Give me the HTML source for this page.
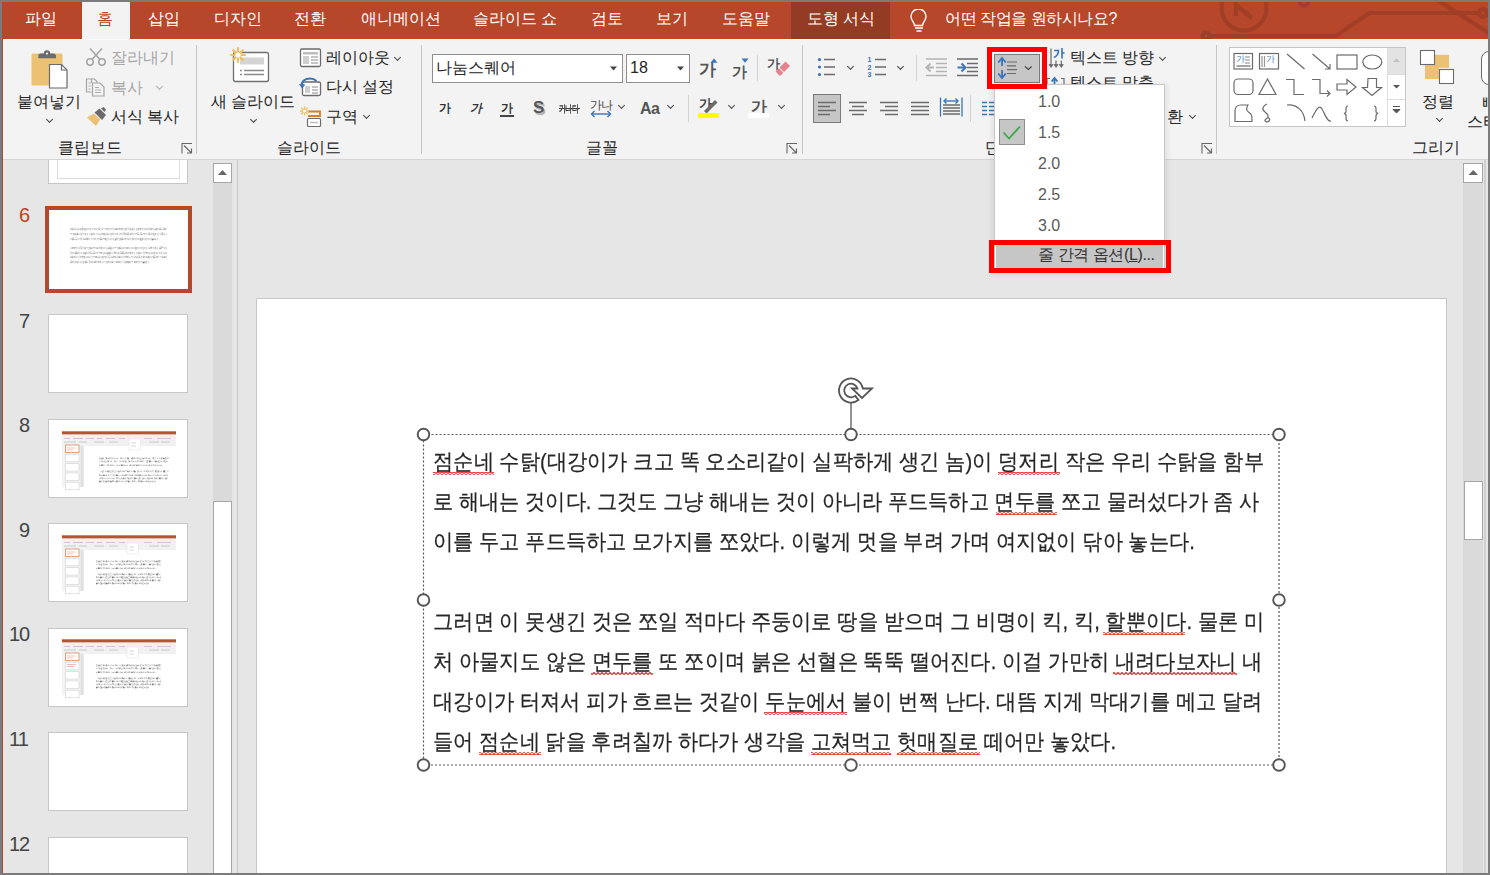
<!DOCTYPE html>
<html><head><meta charset="utf-8">
<style>
*{margin:0;padding:0;box-sizing:border-box}
html,body{width:1490px;height:875px;overflow:hidden;background:#e6e6e6;font-family:"Liberation Sans",sans-serif;color:#262626}
.a{position:absolute}
.t{position:absolute;white-space:nowrap;line-height:20px}
.tab{position:absolute;top:9px;font-size:16px;color:#fff;white-space:nowrap;line-height:20px}
.rb{position:absolute;font-size:16px;white-space:nowrap;line-height:20px;color:#262626}
.sep{position:absolute;width:1px;background:#c6c6c6}
.chev{position:absolute;width:6px;height:6px;border-right:1.3px solid #444;border-bottom:1.3px solid #444;transform:rotate(45deg)}
.num{position:absolute;font-size:20px;color:#444;line-height:20px;letter-spacing:-1px}
.th{position:absolute;left:48px;width:140px;height:79px;background:#fff;border:1px solid #c6c6c6}
.st{position:absolute;left:433px;font-size:22px;color:#262626;-webkit-text-stroke:0.25px #262626;white-space:nowrap;line-height:30px;transform-origin:0 0}
.h{position:absolute;width:13px;height:13px;border-radius:50%;border:1.6px solid #595959;background:#fff}
.mi{position:absolute;left:1038px;font-size:16px;color:#5a5a5a;line-height:20px}
</style></head><body>

<!-- tab bar -->
<div class="a" style="left:0;top:0;width:1490px;height:39px;background:#b7472a"></div>
<div class="a" style="left:82px;top:2px;width:48px;height:38px;background:#f3f3f3"></div>
<div class="a" style="left:791px;top:2px;width:99px;height:37px;background:#943b23"></div>

<svg class="a" style="left:0;top:0" width="1490" height="39" viewBox="0 0 1490 39">
 <g fill="none" stroke="#a03f26" stroke-width="4.2">
  <circle cx="1244" cy="8" r="22.5"/>
  <path d="M1236 0v16M1236 5l16 13"/>
  <path d="M1210 36h126l33-23h108"/>
  <circle cx="1206" cy="36" r="3.5"/>
  <circle cx="1483" cy="13" r="4"/>
  <circle cx="1304" cy="2" r="4"/>
  <path d="M1437 0l52 33"/>
 </g>
</svg>
<svg class="a" style="left:909px;top:9px" width="20" height="24" viewBox="909 9 20 24">
 <path d="M914.5 25.5c0-3-3.5-5-3.5-9a7.5 7.5 0 0 1 15 0c0 4-3.5 6-3.5 9z" fill="none" stroke="#fff" stroke-width="1.4"/>
 <path d="M915 28h8M916.5 31h5" stroke="#fff" stroke-width="1.4"/>
</svg>
<div id="tabs">
<div class="tab" style="left:25px">파일</div>
<div class="tab" style="left:97px;color:#b7472a">홈</div>
<div class="tab" style="left:148px">삽입</div>
<div class="tab" style="left:214px">디자인</div>
<div class="tab" style="left:294px">전환</div>
<div class="tab" style="left:361px">애니메이션</div>
<div class="tab" style="left:473px">슬라이드 쇼</div>
<div class="tab" style="left:591px">검토</div>
<div class="tab" style="left:656px">보기</div>
<div class="tab" style="left:722px">도움말</div>
<div class="tab" style="left:807px">도형 서식</div>
<div class="tab" style="left:945px;letter-spacing:-0.45px">어떤 작업을 원하시나요?</div>
</div>

<!-- ribbon -->
<div class="a" style="left:0;top:39px;width:1490px;height:121px;background:#f3f3f3;border-bottom:1px solid #d5d5d5"></div>


<!-- ===== clipboard group ===== -->
<svg class="a" style="left:28px;top:47px" width="44" height="44" viewBox="28 47 44 44">
 <rect x="31.5" y="53.5" width="31" height="32" rx="1.5" fill="#ecc173"/>
 <path d="M38.3 58.3v-2.3a2.5 2.5 0 0 1 2.5-2.5h3a3.2 3.2 0 0 1 6.4 0h3.3a2.5 2.5 0 0 1 2.5 2.5v2.3z" fill="#6b6b6b"/>
 <circle cx="47" cy="53.6" r="1.1" fill="#f3f3f3"/>
 <path d="M49.5 64.5h12l5.5 5.5v18h-17.5z" fill="#fff" stroke="#6b6b6b" stroke-width="1.2"/>
 <path d="M61.5 64.5v5.5h5.5" fill="none" stroke="#6b6b6b" stroke-width="1.2"/>
</svg>
<div class="rb" style="left:17px;top:92px">붙여넣기</div>
<div class="chev" style="left:47px;top:117px;width:5px;height:5px"></div>
<svg class="a" style="left:86px;top:47px" width="22" height="20" viewBox="86 47 22 20">
 <path d="M90 48.5l10 11M102 48.5l-10 11" stroke="#a6a6a6" stroke-width="1.6" fill="none"/>
 <circle cx="90" cy="62" r="3.2" fill="none" stroke="#a6a6a6" stroke-width="1.5"/>
 <circle cx="102" cy="62" r="3.2" fill="none" stroke="#a6a6a6" stroke-width="1.5"/>
</svg>
<div class="rb" style="left:111px;top:48px;color:#a6a6a6">잘라내기</div>
<svg class="a" style="left:85px;top:77px" width="22" height="21" viewBox="85 77 22 21">
 <path d="M91.5 83v-4h-5v13h5" fill="none" stroke="#a6a6a6" stroke-width="1.2"/>
 <path d="M91.5 79h3l2.5 2.5v1.5" fill="none" stroke="#a6a6a6" stroke-width="1.2"/>
 <path d="M92.5 83h7.5l4 4v9h-11.5z" fill="#f3f3f3" stroke="#a6a6a6" stroke-width="1.2"/>
 <path d="M88.5 83h2M88.5 86h2M88.5 89h2M95 87.5h4M95 90h6M95 92.5h6" stroke="#a6a6a6" stroke-width="0.9"/>
</svg>
<div class="rb" style="left:111px;top:78px;color:#a6a6a6">복사</div>
<div class="chev" style="left:157px;top:84px;width:5px;height:5px;border-color:#b0b0b0"></div>
<svg class="a" style="left:85px;top:106px" width="24" height="22" viewBox="85 106 24 22">
 <path d="M87 117.5l7-4 6 6-4 6.5z" fill="#ecc173"/>
 <path d="M94.5 112.5l5-4 6.5 6.5-4 5z" fill="#6b6b6b"/>
 <path d="M101 108.5l2.5-1.5 2.5 2.5-1.5 2.5z" fill="#6b6b6b"/>
</svg>
<div class="rb" style="left:111px;top:107px">서식 복사</div>
<div class="rb" style="left:58px;top:138px">클립보드</div>
<svg class="a" style="left:180px;top:142px" width="14" height="14" viewBox="180 142 14 14">
 <path d="M182 153.5v-10h10M184 145.5l7.5 7.5M191.5 148.5v4.5h-4.5" fill="none" stroke="#666" stroke-width="1.1"/>
</svg>
<div class="sep" style="left:196px;top:45px;height:109px"></div>

<!-- ===== slides group ===== -->
<svg class="a" style="left:228px;top:45px" width="44" height="40" viewBox="228 45 44 40">
 <rect x="233.5" y="52.5" width="35" height="29" rx="2" fill="#fff" stroke="#707070" stroke-width="1.3"/>
 <rect x="240" y="57.5" width="24" height="7" fill="#d4d4d4"/>
 <path d="M240 70.5h2M244 70.5h20M240 74.5h2M244 74.5h20" stroke="#8a8a8a" stroke-width="1.3"/>
 <g stroke="#f0c060" stroke-width="2.2"><path d="M238 47.3v15.4M230.3 55h15.4M232.6 49.6l10.8 10.8M243.4 49.6l-10.8 10.8"/></g>
 <circle cx="238" cy="55" r="2.6" fill="#fff"/>
</svg>
<div class="rb" style="left:211px;top:92px">새 슬라이드</div>
<div class="chev" style="left:251px;top:117px;width:5px;height:5px"></div>
<svg class="a" style="left:298px;top:46px" width="26" height="84" viewBox="298 46 26 84">
 <rect x="300.5" y="49" width="20" height="17.5" rx="1.5" fill="#fff" stroke="#6b6b6b" stroke-width="1.3"/>
 <rect x="303" y="52" width="15" height="2.5" fill="#bdbdbd"/>
 <rect x="303" y="56" width="6" height="8" fill="#cfcfcf"/>
 <path d="M311 57h7M311 60h7M311 63h7" stroke="#8a8a8a" stroke-width="1"/>
 <rect x="302.5" y="82" width="18" height="13.5" rx="1.5" fill="#fff" stroke="#6b6b6b" stroke-width="1.3"/>
 <rect x="305" y="86" width="5" height="7" fill="#cfcfcf"/>
 <path d="M312 87h6M312 90h6M312 93h6" stroke="#8a8a8a" stroke-width="1"/>
 <path d="M301.5 86c0-5 4-7.5 8.5-7.5 3 0 5 1 6.5 2.5" fill="none" stroke="#3b74b9" stroke-width="2"/>
 <path d="M299 84l3 4.5 3.5-4z" fill="#3b74b9"/>
 <path d="M308 111.5h12v4.5h-12" fill="none" stroke="#e07b22" stroke-width="1.8"/>
 <rect x="307.5" y="118.5" width="13" height="8" rx="1" fill="#fff" stroke="#6b6b6b" stroke-width="1.2"/>
 <path d="M310 122.5h8" stroke="#bdbdbd" stroke-width="1.5"/>
 <g stroke="#f0c060" stroke-width="1.3"><path d="M304.5 106.5v9M300 111h9M301.3 107.8l6.4 6.4M307.7 107.8l-6.4 6.4"/></g>
 <circle cx="304.5" cy="111" r="1.5" fill="#fff"/>
</svg>
<div class="rb" style="left:326px;top:48px">레이아웃</div>
<div class="chev" style="left:395px;top:55px;width:5px;height:5px"></div>
<div class="rb" style="left:326px;top:77px">다시 설정</div>
<div class="rb" style="left:326px;top:107px">구역</div>
<div class="chev" style="left:364px;top:113px;width:5px;height:5px"></div>
<div class="rb" style="left:277px;top:138px">슬라이드</div>
<div class="sep" style="left:421px;top:45px;height:109px"></div>

<!-- ===== font group ===== -->
<div class="a" style="left:432px;top:54px;width:191px;height:29px;background:#fff;border:1px solid #8f8f8f"></div>
<div class="rb" style="left:436px;top:58px">나눔스퀘어</div>
<svg class="a" style="left:608px;top:64px" width="12" height="8"><path d="M2 2.5h7l-3.5 4z" fill="#444"/></svg>
<div class="a" style="left:626px;top:54px;width:64px;height:29px;background:#fff;border:1px solid #8f8f8f"></div>
<div class="rb" style="left:630px;top:58px">18</div>
<svg class="a" style="left:675px;top:64px" width="12" height="8"><path d="M2 2.5h7l-3.5 4z" fill="#444"/></svg>
<div class="a" style="left:699px;top:60px;font-size:17px;line-height:20px;color:#555;font-weight:bold">가</div>
<svg class="a" style="left:709px;top:57px" width="10" height="7"><path d="M1.5 5.8h7l-3.5-4.3z" fill="#3b74b9"/></svg>
<div class="a" style="left:732px;top:63px;font-size:15px;line-height:18px;color:#555;font-weight:bold">가</div>
<svg class="a" style="left:740px;top:57px" width="10" height="7"><path d="M1.5 1.5h7l-3.5 4.3z" fill="#3b74b9"/></svg>
<div class="sep" style="left:757px;top:55px;height:26px;background:#d2d2d2"></div>
<div class="a" style="left:767px;top:56px;font-size:13px;line-height:15px;color:#555;font-weight:bold">가</div>
<svg class="a" style="left:768px;top:58px" width="24" height="22" viewBox="768 58 24 22"><path d="M779.5 67.5l6-6 4.5 4.5-6 6z" fill="#e5828e"/><path d="M776.5 70.5l2.3-2.3 4.5 4.5-2.3 2.3z" fill="#e5828e"/><path d="M775.5 71.5l1.5-1.5 4.5 4.5-1.5 1.5z" fill="#e5828e"/></svg>

<div class="a" style="left:439px;top:100px;font-size:12px;line-height:16px;color:#333;font-weight:bold">가</div>
<div class="a" style="left:470px;top:100px;font-size:12px;line-height:16px;color:#333;font-style:italic;font-weight:bold">가</div>
<div class="a" style="left:501px;top:100px;font-size:12px;line-height:16px;color:#333;font-weight:bold">가</div>
<div class="a" style="left:500px;top:115px;width:14px;height:1.5px;background:#444"></div>
<div class="a" style="left:533px;top:98px;font-size:17px;line-height:20px;color:#555;font-weight:bold;text-shadow:1.5px 1.5px 1px #aaa">S</div>
<div class="a" style="left:559px;top:103px;font-size:10px;line-height:12px;color:#333;letter-spacing:-1px;font-weight:bold;transform:scaleX(0.72);transform-origin:0 0">가나다</div>
<div class="a" style="left:559px;top:107.5px;width:21px;height:1.2px;background:#444"></div>
<div class="a" style="left:590px;top:98px;font-size:12px;line-height:14px;color:#444;letter-spacing:-1px">가나</div>
<svg class="a" style="left:589px;top:110px" width="24" height="8"><path d="M3 4h18" stroke="#3b74b9" stroke-width="1.4"/><path d="M5.5 1l-3 3 3 3M18.5 1l3 3-3 3" fill="none" stroke="#3b74b9" stroke-width="1.4"/></svg>
<div class="chev" style="left:619px;top:103px;width:5px;height:5px"></div>
<div class="a" style="left:640px;top:99px;font-size:16px;line-height:20px;color:#555;font-weight:bold;letter-spacing:-0.5px">Aa</div>
<div class="chev" style="left:668px;top:103px;width:5px;height:5px"></div>
<div class="sep" style="left:688px;top:95px;height:27px;background:#d2d2d2"></div>
<div class="a" style="left:699px;top:96px;font-size:13px;line-height:16px;color:#444;font-weight:bold">가</div>
<svg class="a" style="left:700px;top:97px" width="20" height="18"><path d="M4 14l11-11 2.5 2.5-11 11z" fill="#6b6b6b"/></svg>
<div class="a" style="left:698px;top:113px;width:21px;height:5px;background:#ffff00"></div>
<div class="chev" style="left:729px;top:103px;width:5px;height:5px"></div>
<div class="a" style="left:751px;top:97px;font-size:16px;line-height:20px;color:#555;font-weight:bold">가</div>
<div class="a" style="left:748px;top:113px;width:21px;height:5px;background:#fff"></div>
<div class="chev" style="left:779px;top:103px;width:5px;height:5px"></div>
<div class="rb" style="left:586px;top:138px">글꼴</div>
<svg class="a" style="left:785px;top:142px" width="14" height="14" viewBox="785 142 14 14">
 <path d="M787 153.5v-10h10M789 145.5l7.5 7.5M796.5 148.5v4.5h-4.5" fill="none" stroke="#666" stroke-width="1.1"/>
</svg>
<div class="sep" style="left:802px;top:45px;height:109px"></div>

<!-- ===== paragraph group ===== -->
<svg class="a" style="left:815px;top:55px" width="95" height="24" viewBox="815 55 95 24">
 <g fill="#3b74b9"><circle cx="819.5" cy="59.5" r="1.6"/><circle cx="819.5" cy="67" r="1.6"/><circle cx="819.5" cy="74.5" r="1.6"/></g>
 <path d="M824 59.5h11M824 67h11M824 74.5h11" stroke="#6b6b6b" stroke-width="1.3"/>
 <path d="M875 59.5h11M875 67h11M875 74.5h11" stroke="#6b6b6b" stroke-width="1.3"/>
 <g fill="#3b74b9" font-size="7" font-family="Liberation Sans" font-weight="bold"><text x="867.5" y="62">1</text><text x="867.5" y="69.5">2</text><text x="867.5" y="77">3</text></g>
</svg>
<div class="chev" style="left:848px;top:64px;width:5px;height:5px"></div>
<div class="chev" style="left:898px;top:64px;width:5px;height:5px"></div>
<div class="sep" style="left:916px;top:55px;height:26px;background:#d2d2d2"></div>
<svg class="a" style="left:924px;top:56px" width="58" height="22" viewBox="924 56 58 22">
 <path d="M926 59h21M936 63.5h11M936 67.5h11M936 71.5h11M926 75.5h21" stroke="#b4b4b4" stroke-width="1.4"/>
 <path d="M927 67.5h7" stroke="#b4b4b4" stroke-width="2"/><path d="M930.5 63.5l-4 4 4 4" fill="none" stroke="#b4b4b4" stroke-width="2"/>
 <path d="M957 59h21M967 63.5h11M967 67.5h11M967 71.5h11M957 75.5h21" stroke="#6b6b6b" stroke-width="1.4"/>
 <path d="M957.5 67.5h7" stroke="#3b74b9" stroke-width="2"/><path d="M961.5 63.5l4 4-4 4" fill="none" stroke="#3b74b9" stroke-width="2"/>
</svg>
<div class="a" style="left:813px;top:93.5px;width:28px;height:29.5px;background:#c6c6c6;border:1px solid #7a7a7a"></div>
<svg class="a" style="left:810px;top:95px" width="185" height="25" viewBox="810 95 185 25">
 <g stroke="#6b6b6b" stroke-width="1.3">
 <path d="M818 102.5h18M818 106.5h12M818 110.5h18M818 114.5h12"/>
 <path d="M849 102.5h18M852 106.5h12M849 110.5h18M852 114.5h12"/>
 <path d="M880 102.5h18M885 106.5h13M880 110.5h18M885 114.5h13"/>
 <path d="M911 102.5h18M911 106.5h18M911 110.5h18M911 114.5h18"/>
 <path d="M943 105h17M943 108h17M943 111h17M943 114h17"/>
 </g>
 <path d="M940.5 97.5v19M962 97.5v19" stroke="#3b74b9" stroke-width="1.3"/>
 <path d="M944 101h14" stroke="#3b74b9" stroke-width="1.4"/><path d="M946.5 98.5l-2.5 2.5 2.5 2.5M955.5 98.5l2.5 2.5-2.5 2.5" fill="none" stroke="#3b74b9" stroke-width="1.4"/>
 <path d="M982 102.5h5M982 106.5h5M982 110.5h5M982 114.5h5M989 102.5h6M989 106.5h6M989 110.5h6M989 114.5h6" stroke="#3b74b9" stroke-width="1.3"/>
</svg>
<div class="sep" style="left:970px;top:95px;height:27px;background:#d2d2d2"></div>
<div class="a" style="left:994px;top:54px;width:46px;height:29px;background:#c6c6c6;border:1px solid #7a7a7a"></div>
<svg class="a" style="left:994px;top:54px" width="46" height="29" viewBox="994 54 46 29">
 <path d="M1002 59v7M1002 70v7" stroke="#3b74b9" stroke-width="1.8"/>
 <path d="M998.3 62.5l3.7-4.5 3.7 4.5M998.3 73.5l3.7 4.5 3.7-4.5" fill="none" stroke="#3b74b9" stroke-width="1.9"/>
 <path d="M1007 62h10M1007 65.8h9M1007 69.6h10M1007 73.5h9" stroke="#6b6b6b" stroke-width="1.2"/>
 <path d="M1025 66.5l3.3 3 3.3-3" fill="none" stroke="#444" stroke-width="1.2"/>
</svg>
<svg class="a" style="left:1044px;top:46px" width="24" height="40" viewBox="1044 46 24 40">
 <path d="M1051 48.5v17M1056 60.5v5M1061.3 60.5v5" stroke="#6b6b6b" stroke-width="1.2"/>
 <path d="M1049 64.5l2 3 2-3zM1054 64.5l2 3 2-3zM1059.3 64.5l2 3 2-3z" fill="#6b6b6b" stroke="#6b6b6b" stroke-width="0.8"/>
 <path d="M1054 50.5h4.5c0 3-1.5 5.5-4.5 7M1062 48v10.5M1062 53h2.5" fill="none" stroke="#3b74b9" stroke-width="1.6"/>
 <path d="M1050 78.5h-3v7.5M1061 78.5h3v7.5" fill="none" stroke="#6b6b6b" stroke-width="1.2"/>
 <path d="M1054.5 86v-7.5M1051.5 81.5l3-3.5 3 3.5" fill="none" stroke="#3b74b9" stroke-width="1.8"/>
</svg>
<div class="rb" style="left:1070px;top:48px">텍스트 방향</div>
<div class="chev" style="left:1160px;top:55px;width:5px;height:5px"></div>
<div class="rb" style="left:1070px;top:73px">텍스트 맞춤</div>
<div class="rb" style="left:1167px;top:107px">환</div>
<div class="chev" style="left:1190px;top:113px;width:5px;height:5px"></div>
<div class="rb" style="left:985px;top:138px">단락</div>
<svg class="a" style="left:1200px;top:142px" width="14" height="14" viewBox="1200 142 14 14">
 <path d="M1202 153.5v-10h10M1204 145.5l7.5 7.5M1211.5 148.5v4.5h-4.5" fill="none" stroke="#666" stroke-width="1.1"/>
</svg>
<div class="sep" style="left:1216px;top:45px;height:109px"></div>

<!-- ===== drawing group ===== -->
<div class="a" style="left:1229px;top:47px;width:177px;height:80px;background:#fff;border:1px solid #c6c6c6"></div>
<div class="a" style="left:1387px;top:48px;width:18px;height:26px;background:#e3e3e3;border-left:1px solid #dcdcdc"></div>
<div class="a" style="left:1387px;top:74px;width:18px;height:52px;border-left:1px solid #dcdcdc;border-top:1px solid #dcdcdc"></div>
<div class="a" style="left:1387px;top:99px;width:18px;height:1px;background:#dcdcdc"></div>
<svg class="a" style="left:1229px;top:47px" width="177" height="80" viewBox="1229 47 177 80">
 <path d="M1393 62l3.5-3.5 3.5 3.5z" fill="#c2c2c2"/>
 <path d="M1393 85h7l-3.5 3.5z" fill="#555"/>
 <path d="M1393 106.5h7M1393 109.5h7l-3.5 3.5z" stroke="#555" stroke-width="1" fill="#555"/>
 <g fill="none" stroke="#6b6b6b" stroke-width="1.2">
  <rect x="1234" y="53.5" width="18.5" height="15.5"/>
  <path d="M1236.5 66h14"/>
  <rect x="1259.5" y="53.5" width="19" height="15.5"/>
  <path d="M1262 56v11M1264.5 56v11" stroke="#999"/>
  <path d="M1287 54l17.5 15"/>
  <path d="M1312.5 54l17.5 15M1330 64v5h-5"/>
  <rect x="1337" y="55" width="20" height="14"/>
  <ellipse cx="1372.3" cy="62" rx="9.5" ry="7"/>
  <rect x="1234" y="79" width="19" height="15.5" rx="4"/>
  <path d="M1267.5 79l-8.5 15.5h17z"/>
  <path d="M1286 79.5h8v15h10"/>
  <path d="M1312 79.5h8v14h10M1327 90.5l3 3-3 3"/>
  <path d="M1337 84h10v-4.5l9 7.5-9 7.5v-4.5h-10z"/>
  <path d="M1368 78.5h8.5v9h5l-9.5 8-9.5-8h5z"/>
  <path d="M1235 121.5V111c0-4 2-6 6-6h7c-2 3-2 6 1 7.5 3 1.5 3 4 3 9z"/>
  <path d="M1267 104c-4 2-6 5-2 8 4 3 4 5 1 7-3 2 1 4 3 2 2-2-1-4-2-3"/>
  <path d="M1287 105c10-1 17 6 18 16"/>
  <path d="M1312 118c4-8 7-14 10-9 3 5 5 13 9 12"/>
  <path d="M1348 106c-2 0-2 1-2 3v3l-1.5 1.5 1.5 1.5v3c0 2 0 3 2 3"/>
  <path d="M1374 106c2 0 2 1 2 3v3l1.5 1.5-1.5 1.5v3c0 2 0 3-2 3"/>
 </g>
 <text x="1236" y="62" font-size="9" fill="#3b74b9" font-family="Liberation Sans">가</text>
 <path d="M1245 57h5M1245 60h5M1245 63h5" stroke="#6b6b6b" stroke-width="0.8"/>
 <text x="1266" y="62" font-size="9" fill="#3b74b9" font-family="Liberation Sans">가</text>
</svg>
<svg class="a" style="left:1418px;top:48px" width="40" height="38" viewBox="1418 48 40 38">
 <rect x="1434" y="54.8" width="15" height="13" fill="#ecc173"/>
 <rect x="1425" y="64" width="14" height="15" fill="#ecc173"/>
 <rect x="1420.5" y="50.5" width="14" height="14" fill="#fff" stroke="#6b6b6b" stroke-width="1.1"/>
 <rect x="1439.5" y="69.5" width="14" height="14" fill="#fff" stroke="#6b6b6b" stroke-width="1.1"/>
</svg>
<div class="rb" style="left:1422px;top:92px">정렬</div>
<div class="chev" style="left:1437px;top:116px;width:5px;height:5px"></div>
<div class="a" style="left:1481px;top:51px;width:20px;height:34px;border:1.2px solid #6b6b6b;border-radius:8px;background:#fff"></div>
<div class="rb" style="left:1482px;top:93px">빠</div>
<div class="rb" style="left:1467px;top:112px">스타</div>
<div class="rb" style="left:1412px;top:138px">그리기</div>

<!-- workspace -->
<div class="a" style="left:0;top:160px;width:1490px;height:715px;background:#e6e6e6"></div>
<div class="a" style="left:2px;top:39px;width:1px;height:834px;background:#b7472a"></div>
<div class="a" style="left:3px;top:39px;width:1px;height:120px;background:#fff"></div>
<div class="a" style="left:3px;top:39px;width:1485px;height:1px;background:#fbfbfb"></div>
<!-- left scrollbar -->
<div class="a" style="left:213px;top:163px;width:19px;height:710px;background:#dadada"></div>
<div class="a" style="left:213px;top:163px;width:19px;height:20px;background:#fff;border:1px solid #a6a6a6"></div>
<svg class="a" style="left:213px;top:163px" width="19" height="20"><path d="M5 12h9l-4.5-5z" fill="#666"/></svg>
<div class="a" style="left:213px;top:501px;width:19px;height:380px;background:#fff;border:1px solid #a6a6a6"></div>
<div class="a" style="left:237px;top:160px;width:1px;height:713px;background:#c8c8c8"></div>
<!-- thumbnails -->
<div class="th" style="top:160px;height:24px;border-top:none"></div>
<div class="a" style="left:57px;top:160px;width:123px;height:19px;border:1px solid #dcdcdc;border-top:none"></div>
<div class="a" style="left:45px;top:206px;width:147px;height:87px;background:#fff;border:4px solid #b7472a"></div>
<div class="num" style="left:19px;top:205px;color:#c43e1c">6</div>
<div class="th" style="top:314px"></div>
<div class="num" style="left:19px;top:311px">7</div>
<div class="th" style="top:419px"></div>
<div class="num" style="left:19px;top:415px">8</div>
<div class="th" style="top:523px"></div>
<div class="num" style="left:19px;top:520px">9</div>
<div class="th" style="top:628px"></div>
<div class="num" style="left:9px;top:624px">10</div>
<div class="th" style="top:732px"></div>
<div class="num" style="left:9px;top:729px">11</div>
<div class="th" style="top:837px;height:60px"></div>
<div class="num" style="left:9px;top:834px">12</div>
<div class="a" style="left:49px;top:210px;width:139px;height:78px;overflow:hidden;opacity:0.6"><div class="a" style="left:-49px;top:-210px;width:1490px;height:875px"><div class="a" style="left:0;top:0;width:1490px;height:875px;transform-origin:0 0;transform:translate(18.94px,175.39px) scale(0.1168)"><div class="st" style="transform:scaleX(0.9211);top:447px">점순네 수탉(대강이가 크고 똑 오소리같이 실팍하게 생긴 놈)이 덩저리 작은 우리 수탉을 함부</div><div class="st" style="transform:scaleX(0.9188);top:487px">로 해내는 것이다. 그것도 그냥 해내는 것이 아니라 푸드득하고 면두를 쪼고 물러섰다가 좀 사</div><div class="st" style="transform:scaleX(0.9207);top:527px">이를 두고 푸드득하고 모가지를 쪼았다. 이렇게 멋을 부려 가며 여지없이 닦아 놓는다.</div><div class="st" style="transform:scaleX(0.9215);top:607px">그러면 이 못생긴 것은 쪼일 적마다 주둥이로 땅을 받으며 그 비명이 킥, 킥, 할뿐이다. 물론 미</div><div class="st" style="transform:scaleX(0.9219);top:647px">처 아물지도 않은 면두를 또 쪼이며 붉은 선혈은 뚝뚝 떨어진다. 이걸 가만히 내려다보자니 내</div><div class="st" style="transform:scaleX(0.9219);top:687px">대강이가 터져서 피가 흐르는 것같이 두눈에서 불이 번쩍 난다. 대뜸 지게 막대기를 메고 달려</div><div class="st" style="transform:scaleX(0.9194);top:727px">들어 점순네 닭을 후려칠까 하다가 생각을 고쳐먹고 헛매질로 떼어만 놓았다.</div></div></div></div><div class="a" style="left:49px;top:419.5px;width:139px;height:78px;overflow:hidden"><svg class="a" style="left:0;top:0" width="139" height="78" viewBox="0 0 139 78"><rect x="13" y="11.3" width="114" height="3.3" fill="#c24e2e"/><rect x="13" y="14.6" width="114" height="11.4" fill="#f1f1f1"/><path d="M15 18.5h6M24 18.5h10M37 18.5h8M48 18.5h5M57 18.5h9M70 18.5h6M95 18.5h8M108 18.5h14M15 22h12M30 22h8M45 22h10M60 22h9M100 22h10M112 22h9" stroke="#c9c9c9" stroke-width="1"/><rect x="13" y="26" width="22" height="41" fill="#f3f3f3"/><rect x="16.5" y="25.0" width="13.5" height="7.5" fill="#fff" stroke="#d9927a" stroke-width="0.9"/><rect x="16.5" y="34.3" width="13.5" height="7.5" fill="#fff" stroke="#dedede" stroke-width="0.9"/><rect x="16.5" y="43.6" width="13.5" height="7.5" fill="#fff" stroke="#dedede" stroke-width="0.9"/><rect x="16.5" y="52.9" width="13.5" height="7.5" fill="#fff" stroke="#dedede" stroke-width="0.9"/><rect x="16.5" y="62.2" width="13.5" height="7.5" fill="#fff" stroke="#dedede" stroke-width="0.9"/><rect x="31.5" y="26" width="3" height="41" fill="#e0e0e0"/><rect x="80" y="19" width="11.5" height="11" fill="#fff" stroke="#e4e4e4" stroke-width="0.6"/><path d="M82 23h5M82 26h5" stroke="#bbb" stroke-width="0.6"/><path d="M18 28h8M18 30h6" stroke="#d9a090" stroke-width="0.6"/></svg><div class="a" style="left:0;top:0;width:1490px;height:875px;opacity:0.8;transform-origin:0 0;transform:translate(13.93px,-0.15px) scale(0.0833)"><div class="st" style="transform:scaleX(0.9211);top:447px">점순네 수탉(대강이가 크고 똑 오소리같이 실팍하게 생긴 놈)이 덩저리 작은 우리 수탉을 함부</div><div class="st" style="transform:scaleX(0.9188);top:487px">로 해내는 것이다. 그것도 그냥 해내는 것이 아니라 푸드득하고 면두를 쪼고 물러섰다가 좀 사</div><div class="st" style="transform:scaleX(0.9207);top:527px">이를 두고 푸드득하고 모가지를 쪼았다. 이렇게 멋을 부려 가며 여지없이 닦아 놓는다.</div><div class="st" style="transform:scaleX(0.9215);top:607px">그러면 이 못생긴 것은 쪼일 적마다 주둥이로 땅을 받으며 그 비명이 킥, 킥, 할뿐이다. 물론 미</div><div class="st" style="transform:scaleX(0.9219);top:647px">처 아물지도 않은 면두를 또 쪼이며 붉은 선혈은 뚝뚝 떨어진다. 이걸 가만히 내려다보자니 내</div><div class="st" style="transform:scaleX(0.9219);top:687px">대강이가 터져서 피가 흐르는 것같이 두눈에서 불이 번쩍 난다. 대뜸 지게 막대기를 메고 달려</div><div class="st" style="transform:scaleX(0.9194);top:727px">들어 점순네 닭을 후려칠까 하다가 생각을 고쳐먹고 헛매질로 떼어만 놓았다.</div></div></div><div class="a" style="left:49px;top:524px;width:139px;height:78px;overflow:hidden"><svg class="a" style="left:0;top:0" width="139" height="78" viewBox="0 0 139 78"><rect x="13" y="11.3" width="114" height="3.3" fill="#c24e2e"/><rect x="13" y="14.6" width="114" height="11.4" fill="#f1f1f1"/><path d="M15 18.5h6M24 18.5h10M37 18.5h8M48 18.5h5M57 18.5h9M70 18.5h6M95 18.5h8M108 18.5h14M15 22h12M30 22h8M45 22h10M60 22h9M100 22h10M112 22h9" stroke="#c9c9c9" stroke-width="1"/><rect x="13" y="26" width="22" height="41" fill="#f3f3f3"/><rect x="16.5" y="25.0" width="13.5" height="7.5" fill="#fff" stroke="#d9927a" stroke-width="0.9"/><rect x="16.5" y="34.3" width="13.5" height="7.5" fill="#fff" stroke="#dedede" stroke-width="0.9"/><rect x="16.5" y="43.6" width="13.5" height="7.5" fill="#fff" stroke="#dedede" stroke-width="0.9"/><rect x="16.5" y="52.9" width="13.5" height="7.5" fill="#fff" stroke="#dedede" stroke-width="0.9"/><rect x="16.5" y="62.2" width="13.5" height="7.5" fill="#fff" stroke="#dedede" stroke-width="0.9"/><rect x="31.5" y="26" width="3" height="41" fill="#e0e0e0"/><rect x="78" y="19" width="11.5" height="11" fill="#fff" stroke="#e4e4e4" stroke-width="0.6"/><path d="M80 23h5M80 26h5" stroke="#bbb" stroke-width="0.6"/><path d="M18 28h8M18 30h6" stroke="#d9a090" stroke-width="0.6"/></svg><div class="a" style="left:0;top:0;width:1490px;height:875px;opacity:0.8;transform-origin:0 0;transform:translate(13.23px,1.74px) scale(0.078)"><div class="st" style="transform:scaleX(0.9211);top:447px">점순네 수탉(대강이가 크고 똑 오소리같이 실팍하게 생긴 놈)이 덩저리 작은 우리 수탉을 함부</div><div class="st" style="transform:scaleX(0.9188);top:487px">로 해내는 것이다. 그것도 그냥 해내는 것이 아니라 푸드득하고 면두를 쪼고 물러섰다가 좀 사</div><div class="st" style="transform:scaleX(0.9207);top:527px">이를 두고 푸드득하고 모가지를 쪼았다. 이렇게 멋을 부려 가며 여지없이 닦아 놓는다.</div><div class="st" style="transform:scaleX(0.9215);top:607px">그러면 이 못생긴 것은 쪼일 적마다 주둥이로 땅을 받으며 그 비명이 킥, 킥, 할뿐이다. 물론 미</div><div class="st" style="transform:scaleX(0.9219);top:647px">처 아물지도 않은 면두를 또 쪼이며 붉은 선혈은 뚝뚝 떨어진다. 이걸 가만히 내려다보자니 내</div><div class="st" style="transform:scaleX(0.9219);top:687px">대강이가 터져서 피가 흐르는 것같이 두눈에서 불이 번쩍 난다. 대뜸 지게 막대기를 메고 달려</div><div class="st" style="transform:scaleX(0.9194);top:727px">들어 점순네 닭을 후려칠까 하다가 생각을 고쳐먹고 헛매질로 떼어만 놓았다.</div></div></div><div class="a" style="left:49px;top:628px;width:139px;height:78px;overflow:hidden"><svg class="a" style="left:0;top:0" width="139" height="78" viewBox="0 0 139 78"><rect x="13" y="11.3" width="114" height="3.3" fill="#c24e2e"/><rect x="13" y="14.6" width="114" height="11.4" fill="#f1f1f1"/><path d="M15 18.5h6M24 18.5h10M37 18.5h8M48 18.5h5M57 18.5h9M70 18.5h6M95 18.5h8M108 18.5h14M15 22h12M30 22h8M45 22h10M60 22h9M100 22h10M112 22h9" stroke="#c9c9c9" stroke-width="1"/><rect x="13" y="26" width="22" height="41" fill="#f3f3f3"/><rect x="16.5" y="25.0" width="13.5" height="7.5" fill="#fff" stroke="#d9927a" stroke-width="0.9"/><rect x="16.5" y="34.3" width="13.5" height="7.5" fill="#fff" stroke="#dedede" stroke-width="0.9"/><rect x="16.5" y="43.6" width="13.5" height="7.5" fill="#fff" stroke="#dedede" stroke-width="0.9"/><rect x="16.5" y="52.9" width="13.5" height="7.5" fill="#fff" stroke="#dedede" stroke-width="0.9"/><rect x="16.5" y="62.2" width="13.5" height="7.5" fill="#fff" stroke="#dedede" stroke-width="0.9"/><rect x="31.5" y="26" width="3" height="41" fill="#e0e0e0"/><rect x="78" y="19" width="11.5" height="11" fill="#fff" stroke="#e4e4e4" stroke-width="0.6"/><path d="M80 23h5M80 26h5" stroke="#bbb" stroke-width="0.6"/><path d="M18 36.5h9M18 38.5h7" stroke="#e0a090" stroke-width="0.7"/><path d="M18 28h8M18 30h6" stroke="#d9a090" stroke-width="0.6"/></svg><div class="a" style="left:0;top:0;width:1490px;height:875px;opacity:0.8;transform-origin:0 0;transform:translate(13.23px,1.74px) scale(0.078)"><div class="st" style="transform:scaleX(0.9211);top:447px">점순네 수탉(대강이가 크고 똑 오소리같이 실팍하게 생긴 놈)이 덩저리 작은 우리 수탉을 함부</div><div class="st" style="transform:scaleX(0.9188);top:487px">로 해내는 것이다. 그것도 그냥 해내는 것이 아니라 푸드득하고 면두를 쪼고 물러섰다가 좀 사</div><div class="st" style="transform:scaleX(0.9207);top:527px">이를 두고 푸드득하고 모가지를 쪼았다. 이렇게 멋을 부려 가며 여지없이 닦아 놓는다.</div><div class="st" style="transform:scaleX(0.9215);top:607px">그러면 이 못생긴 것은 쪼일 적마다 주둥이로 땅을 받으며 그 비명이 킥, 킥, 할뿐이다. 물론 미</div><div class="st" style="transform:scaleX(0.9219);top:647px">처 아물지도 않은 면두를 또 쪼이며 붉은 선혈은 뚝뚝 떨어진다. 이걸 가만히 내려다보자니 내</div><div class="st" style="transform:scaleX(0.9219);top:687px">대강이가 터져서 피가 흐르는 것같이 두눈에서 불이 번쩍 난다. 대뜸 지게 막대기를 메고 달려</div><div class="st" style="transform:scaleX(0.9194);top:727px">들어 점순네 닭을 후려칠까 하다가 생각을 고쳐먹고 헛매질로 떼어만 놓았다.</div></div></div>
<!-- right scrollbar -->
<div class="a" style="left:1463px;top:163px;width:20px;height:710px;background:#dadada"></div>
<div class="a" style="left:1484px;top:160px;width:1.5px;height:713px;background:#d0d0d0"></div>
<div class="a" style="left:1463px;top:163px;width:20px;height:20px;background:#fff;border:1px solid #a6a6a6"></div>
<svg class="a" style="left:1463px;top:163px" width="20" height="20"><path d="M5.5 12h9.5l-4.75-5z" fill="#666"/></svg>
<div class="a" style="left:1464px;top:481px;width:19px;height:59px;background:#fff;border:1px solid #a6a6a6"></div>
<!-- slide -->
<div class="a" style="left:256px;top:298px;width:1191px;height:600px;background:#fff;border:1px solid #c6c6c6"></div>

<!-- slide text -->
<div class="st" id="L0" style="transform:scaleX(0.9211);top:447px">점순네 수탉(대강이가 크고 똑 오소리같이 실팍하게 생긴 놈)이 덩저리 작은 우리 수탉을 함부</div>
<div class="st" id="L1" style="transform:scaleX(0.9188);top:487px">로 해내는 것이다. 그것도 그냥 해내는 것이 아니라 푸드득하고 면두를 쪼고 물러섰다가 좀 사</div>
<div class="st" id="L2" style="transform:scaleX(0.9207);top:527px">이를 두고 푸드득하고 모가지를 쪼았다. 이렇게 멋을 부려 가며 여지없이 닦아 놓는다.</div>
<div class="st" id="L3" style="transform:scaleX(0.9215);top:607px">그러면 이 못생긴 것은 쪼일 적마다 주둥이로 땅을 받으며 그 비명이 킥, 킥, 할뿐이다. 물론 미</div>
<div class="st" id="L4" style="transform:scaleX(0.9219);top:647px">처 아물지도 않은 면두를 또 쪼이며 붉은 선혈은 뚝뚝 떨어진다. 이걸 가만히 내려다보자니 내</div>
<div class="st" id="L5" style="transform:scaleX(0.9219);top:687px">대강이가 터져서 피가 흐르는 것같이 두눈에서 불이 번쩍 난다. 대뜸 지게 막대기를 메고 달려</div>
<div class="st" id="L6" style="transform:scaleX(0.9194);top:727px">들어 점순네 닭을 후려칠까 하다가 생각을 고쳐먹고 헛매질로 떼어만 놓았다.</div>

<!-- text box selection -->
<svg class="a" style="left:400px;top:370px" width="900" height="410" viewBox="400 370 900 410">
 <rect x="423.5" y="434.5" width="855.5" height="330.5" fill="none" stroke="#555" stroke-width="1.2" stroke-dasharray="2 2"/>
 <path d="M851 403v26" stroke="#595959" stroke-width="1.3"/>
 <g fill="#fff" stroke="#555" stroke-width="1.9">
  <circle cx="423.5" cy="434.5" r="5.8"/><circle cx="851" cy="434.5" r="5.8"/><circle cx="1279" cy="434.5" r="5.8"/>
  <circle cx="423.5" cy="600" r="5.8"/><circle cx="1279" cy="600" r="5.8"/>
  <circle cx="423.5" cy="765" r="5.8"/><circle cx="851" cy="765" r="5.8"/><circle cx="1279" cy="765" r="5.8"/>
 </g>
 <path d="M858.39 399.96A12 12 0 1 1 862.83 388.50L872 388.5L862 398L852 388.5L857.50 388.50A6.8 6.8 0 1 0 855.19 395.86Z" fill="#fff" stroke="#555" stroke-width="1.8" stroke-linejoin="miter"/>
</svg>
<!-- squiggles -->
<svg class="a" style="left:420px;top:460px" width="850" height="300" viewBox="420 460 850 300">
 <defs><pattern id="sq" width="4" height="3" patternUnits="userSpaceOnUse"><path d="M0 2.5L2 0.5L4 2.5" fill="none" stroke="#ee2222" stroke-width="1.2"/></pattern></defs>
 <g fill="url(#sq)">
  <rect x="433" y="472" width="61" height="3"/>
  <rect x="998" y="472" width="62" height="3"/>
  <rect x="996" y="512" width="61" height="3"/>
  <rect x="1103" y="632" width="82" height="3"/>
  <rect x="591" y="672" width="62" height="3"/>
  <rect x="1113" y="672" width="124" height="3"/>
  <rect x="764" y="712" width="83" height="3"/>
  <rect x="479" y="752" width="62" height="3"/>
  <rect x="811" y="752" width="80" height="3"/>
  <rect x="897" y="752" width="83" height="3"/>
 </g>
</svg>

<!-- dropdown -->
<div class="a" style="left:991px;top:84px;width:177px;height:191px;background:rgba(0,0,0,0.06);filter:blur(2px)"></div>
<div class="a" style="left:994px;top:84px;width:171px;height:186px;background:#fff;border:1px solid #c6c6c6"></div>
<div class="mi" style="top:92px">1.0</div>
<div class="a" style="left:999px;top:119px;width:26px;height:26px;background:#c6c6c6;border:1px solid #8f8f8f"></div>
<svg class="a" style="left:999px;top:119px" width="26" height="26"><path d="M4.5 13.5l5.5 6 11-12" fill="none" stroke="#3aa84b" stroke-width="1.8"/></svg>
<div class="mi" style="top:123px">1.5</div>
<div class="mi" style="top:154px">2.0</div>
<div class="mi" style="top:185px">2.5</div>
<div class="mi" style="top:216px">3.0</div>
<div class="a" style="left:995px;top:245px;width:169px;height:23px;background:#c6c6c6;border-left:1px solid #fff;border-right:1px solid #fff"></div>
<div class="mi" style="top:245px;color:#333;letter-spacing:-0.4px">줄 간격 옵션(<u>L</u>)...</div>
<!-- red boxes -->
<div class="a" style="left:987px;top:47px;width:60px;height:42px;border:5px solid #ff0000"></div>
<div class="a" style="left:989px;top:240px;width:182px;height:33px;border:5px solid #ff0000"></div>

<!-- frame border -->
<div class="a" style="left:0;top:0;width:1490px;height:875px;border:2px solid #7b7b7b;pointer-events:none"></div>
</body></html>
